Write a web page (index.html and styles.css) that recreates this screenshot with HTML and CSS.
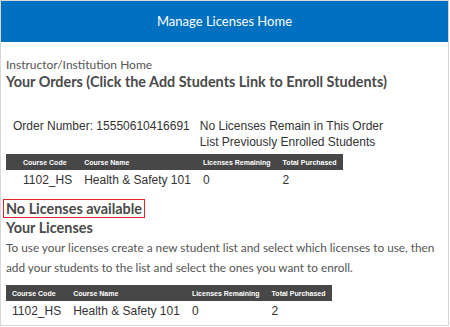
FILE: index.html
```html
<!DOCTYPE html>
<html lang="en">
<head>
    <meta charset="UTF-8">
    <title>Manage Licenses Home</title>
    <link rel="stylesheet" href="styles.css">
</head>
<body>
<div class="page">
    <header class="topbar">Manage Licenses Home</header>
    <main class="content">
        <div class="crumb">Instructor/Institution Home</div>
        <h2 class="heading">Your Orders (Click the Add Students Link to Enroll Students)</h2>

        <div class="order">
            <div class="order-num">Order Number: 15550610416691</div>
            <div class="order-info">
                <div>No Licenses Remain in This Order</div>
                <div>List Previously Enrolled Students</div>
            </div>
        </div>
        <table class="courses courses-order">
            <thead>
            <tr>
                <th>Course Code</th>
                <th>Course Name</th>
                <th>Licenses Remaining</th>
                <th>Total Purchased</th>
            </tr>
            </thead>
            <tbody>
            <tr>
                <td>1102_HS</td>
                <td>Health &amp; Safety 101</td>
                <td>0</td>
                <td>2</td>
            </tr>
            </tbody>
        </table>

        <div class="alert">No Licenses available</div>
        <h2 class="heading">Your Licenses</h2>
        <p class="intro">To use your licenses create a new student list and select which licenses to use, then add your students to the list and select the ones you want to enroll.</p>

        <table class="courses">
            <thead>
            <tr>
                <th>Course Code</th>
                <th>Course Name</th>
                <th>Licenses Remaining</th>
                <th>Total Purchased</th>
            </tr>
            </thead>
            <tbody>
            <tr>
                <td>1102_HS</td>
                <td>Health &amp; Safety 101</td>
                <td>0</td>
                <td>2</td>
            </tr>
            </tbody>
        </table>
    </main>
</div>
</body>
</html>
```

FILE: styles.css
```css
* {
    margin: 0;
    padding: 0;
    box-sizing: border-box;
}

body {
    background: #fff;
    font-family: Lato, "Liberation Sans", sans-serif;
    color: #555;
}

.page {
    width: 449px;
    height: 326px;
    border: 1px solid #d8d8d8;
    overflow: hidden;
}

.topbar {
    height: 41px;
    line-height: 41px;
    background: #0070c0;
    color: #fff;
    font-size: 13px;
    text-align: center;
}

.content {
    padding: 15px 6px 0 5px;
}

.crumb {
    font-size: 12px;
    line-height: 15px;
    color: #555;
}

.heading {
    font-size: 14.4px;
    font-weight: bold;
    line-height: 20px;
    color: #4a4a4a;
}

.alert {
    display: inline-block;
    margin-left: -3px;
    padding: 0 2px;
    font-size: 14.4px;
    font-weight: bold;
    line-height: 17px;
    color: #4a4a4a;
    border: 1px solid #e0262f;
}

.order {
    display: flex;
    gap: 10px;
    margin-top: 26px;
    padding-left: 7px;
    font-family: "Liberation Sans", Arial, sans-serif;
    font-size: 12px;
    line-height: 16px;
    color: #333;
}

.courses {
    border-collapse: collapse;
    font-family: "Liberation Sans", Arial, sans-serif;
    color: #333;
}

.courses-order {
    margin-top: 4px;
    margin-bottom: 10px;
}

.courses th {
    height: 16px;
    padding: 0 6px;
    background: #474747;
    color: #fff;
    font-size: 7px;
    font-weight: bold;
    text-align: left;
    vertical-align: middle;
}

.courses td {
    padding: 3px 6px 0;
    font-size: 12px;
    line-height: 15px;
    text-align: left;
}

.courses-order th:first-child,
.courses-order td:first-child {
    padding-left: 17px;
}

.intro {
    margin-bottom: 7px;
    font-size: 11.8px;
    line-height: 20px;
    color: #555;
}
```
